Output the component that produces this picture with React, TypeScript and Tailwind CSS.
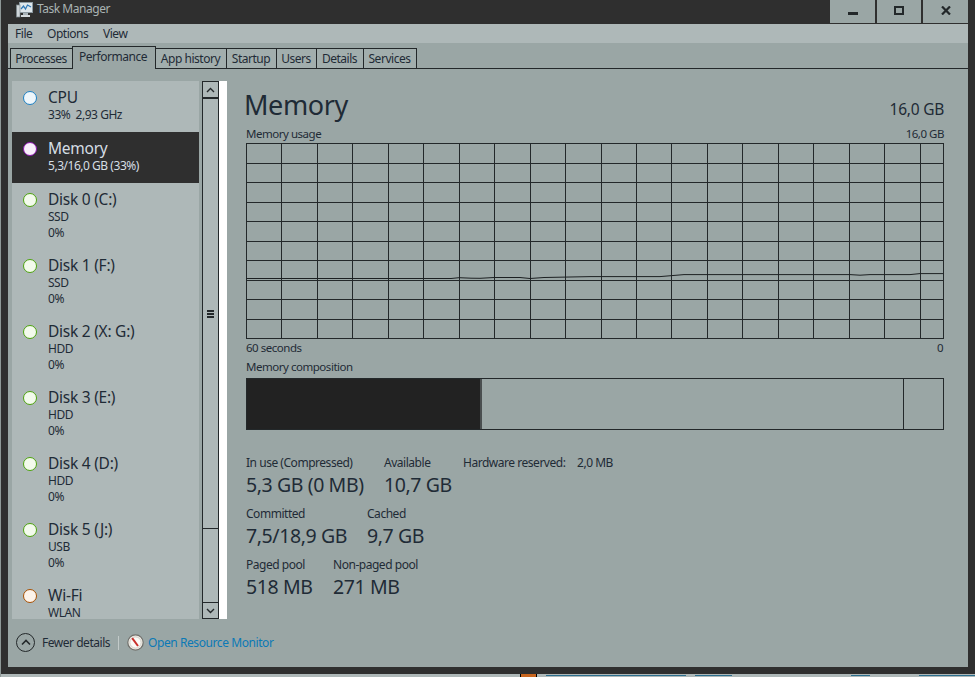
import React from 'react'

const tabs = [
  { name: 'Processes', w: 'w-[63px]' },
  { name: 'Performance', w: 'w-[84px]', active: true },
  { name: 'App history', w: 'w-[72px]' },
  { name: 'Startup', w: 'w-[51px]' },
  { name: 'Users', w: 'w-[41px]' },
  { name: 'Details', w: 'w-[48px]' },
  { name: 'Services', w: 'w-[54px]' },
]

const devices = [
  { name: 'CPU', lines: ['33%  2,93 GHz'], ring: 'border-[#1b80c4]', fill: 'bg-[#eef6fb]' },
  { name: 'Memory', lines: ['5,3/16,0 GB (33%)'], ring: 'border-[#8a12ae]', fill: 'bg-[#f8effb]', selected: true },
  { name: 'Disk 0 (C:)', lines: ['SSD', '0%'], ring: 'border-[#4ca30d]', fill: 'bg-[#f3faec]' },
  { name: 'Disk 1 (F:)', lines: ['SSD', '0%'], ring: 'border-[#4ca30d]', fill: 'bg-[#f3faec]' },
  { name: 'Disk 2 (X: G:)', lines: ['HDD', '0%'], ring: 'border-[#4ca30d]', fill: 'bg-[#f3faec]' },
  { name: 'Disk 3 (E:)', lines: ['HDD', '0%'], ring: 'border-[#4ca30d]', fill: 'bg-[#f3faec]' },
  { name: 'Disk 4 (D:)', lines: ['HDD', '0%'], ring: 'border-[#4ca30d]', fill: 'bg-[#f3faec]' },
  { name: 'Disk 5 (J:)', lines: ['USB', '0%'], ring: 'border-[#4ca30d]', fill: 'bg-[#f3faec]' },
  { name: 'Wi-Fi', lines: ['WLAN'], ring: 'border-[#a74f01]', fill: 'bg-[#fdf3ea]' },
]

const graphLine =
  '0,278.5 205,278.5 213,277.7 225,278.2 234,278.3 248,277.5 274,277.5 284,278.5 298,277.5 345,276.6 414,276.6 438,274.6 604,274.6 614,275.2 624,274.6 664,274.6 674,273.6 697,273.6'

function Graph() {
  const cols = Array.from({ length: 20 }, (_, i) => Math.round(i * 35.45) + 0.5)
  const rows = Array.from({ length: 11 }, (_, i) => Math.round(i * 19.5) + 0.5)
  return (
    <svg width="698" height="196" viewBox="0 0 698 196" className="block">
      {cols.map((x) => (
        <line key={x} x1={x} x2={x} y1="0" y2="196" stroke="#23282a" strokeWidth="1" />
      ))}
      <line x1="697.5" x2="697.5" y1="0" y2="196" stroke="#23282a" strokeWidth="1" />
      {rows.map((y) => (
        <line key={y} x1="0" x2="698" y1={y} y2={y} stroke="#23282a" strokeWidth="1" />
      ))}
      <polyline
        points={graphLine}
        transform="translate(0,-143)"
        fill="none"
        stroke="#1c2022"
        strokeWidth="1"
      />
    </svg>
  )
}

function Stat({ label, value, w }: { label: string; value: string; w: string }) {
  return (
    <div className={w}>
      <div className="h-[16px] text-[12px] leading-[15px] text-[#1f2b36]">{label}</div>
      <div className="mt-px h-[26px] whitespace-nowrap text-[19.5px] leading-[26px] tracking-[-0.4px] text-[#1f2b36]">{value}</div>
    </div>
  )
}

function AppIcon() {
  return (
    <svg width="17" height="17" viewBox="0 0 17 17">
      <rect x="3.5" y="1.5" width="13" height="10" fill="#dfe7ec" stroke="#8d9aa2" />
      <polyline points="5,8 7.5,5 9.5,8 11.5,4 15,6" fill="none" stroke="#2f78b5" strokeWidth="1.2" />
      <rect x="0.5" y="4" width="3.5" height="12" fill="#cfd6da" stroke="#7e8a90" strokeWidth="0.7" />
      <rect x="7" y="12" width="5" height="2" fill="#aab4b9" />
      <rect x="5" y="14" width="9" height="2" fill="#d6dcdf" />
    </svg>
  )
}

function MonitorIcon() {
  return (
    <svg width="17" height="17" viewBox="0 0 17 17">
      <circle cx="8.5" cy="8.5" r="7.7" fill="#f1ede6" stroke="#6f6f6b" strokeWidth="1.2" />
      <circle cx="8.5" cy="8.5" r="5.6" fill="#fbfaf7" stroke="#bdb9b0" strokeWidth="0.6" />
      <line x1="5.2" y1="4.2" x2="11" y2="12" stroke="#c9302c" strokeWidth="2" />
    </svg>
  )
}

export default function App() {
  return (
    <div className="relative flex h-[677px] w-[975px] flex-col overflow-hidden bg-[#2f2f2f] font-['Noto_Sans','Liberation_Sans',sans-serif] tracking-[-0.47px]">
      <div className="absolute left-0 top-0 h-full w-px bg-[#8d9796]" />

      {/* Title bar */}
      <div className="flex h-[24px] shrink-0">
        <div className="ml-[16px] mt-px"><AppIcon /></div>
        <span className="ml-[4px] text-[12px] leading-[18px] text-[#aab3b3]">Task Manager</span>
        <div className="ml-auto mr-[7px] flex gap-[2px]">
          <div className="flex h-[23px] w-[45px] items-center justify-center bg-[#9aa6a5]">
            <div className="mt-[3px] h-[3px] w-[10px] bg-[#23282a]" />
          </div>
          <div className="flex h-[23px] w-[44px] items-center justify-center bg-[#9aa6a5]">
            <div className="mb-[2px] h-[9px] w-[10px] border-2 border-[#23282a]" />
          </div>
          <div className="flex h-[23px] w-[45px] items-center justify-center bg-[#9aa6a5]">
            <svg width="10" height="9" viewBox="0 0 10 9" className="mb-[3px]">
              <path d="M1 0.5 L9 8.5 M9 0.5 L1 8.5" stroke="#23282a" strokeWidth="2.2" fill="none" />
            </svg>
          </div>
        </div>
      </div>

      {/* Window */}
      <div className="ml-[8px] mr-[7px] flex h-[643px] shrink-0 flex-col bg-[#9aa6a5]">
        <div className="flex h-[19px] shrink-0 bg-[#aeb8b8] text-[12px] leading-[19px] text-[#1f2b36]">
          <span className="ml-[7px] w-[32px]">File</span>
          <span className="w-[56px]">Options</span>
          <span>View</span>
        </div>

        <div className="flex h-[26px] shrink-0 items-end border-b border-[#23282a] pl-[3px]">
          {tabs.map((t) =>
            t.active ? (
              <div
                key={t.name}
                className={`${t.w} relative -mb-px -ml-px flex h-[23px] shrink-0 justify-center border border-b-0 border-[#23282a] bg-[#9aa6a5] pr-[2px] text-[12px] leading-[20px] text-[#1f2b36]`}
              >
                {t.name}
              </div>
            ) : (
              <div
                key={t.name}
                className={`${t.w} -ml-px flex h-[20px] shrink-0 justify-center border border-b-0 border-[#23282a] bg-[#a2aead] pr-px text-[12px] leading-[19px] text-[#1f2b36]`}
              >
                {t.name}
              </div>
            ),
          )}
        </div>

        <div className="flex min-h-0 flex-1">
          {/* Device list */}
          <div className="ml-[4px] mt-[12px] flex h-[538px] shrink-0">
            <div className="h-full w-[187px] overflow-hidden bg-[#aeb8b8]">
              {devices.map((d) => (
                <div
                  key={d.name}
                  className={`flex pt-[6px] ${d.lines.length === 1 ? 'h-[51px]' : 'h-[66px]'} ${d.selected ? 'bg-[#2f2f2f] text-[#d5dee4]' : 'text-[#1f2b36]'}`}
                >
                  <div className={`ml-[11px] mt-[4px] h-[14px] w-[14px] shrink-0 rounded-full border-[1.5px] ${d.ring} ${d.fill}`} />
                  <div className="ml-[11px]">
                    <div className="h-[20px] whitespace-nowrap text-[15.5px] leading-[20px] tracking-[-0.25px]">{d.name}</div>
                    {d.lines.map((l, i) => (
                      <div key={i} className="h-[16px] whitespace-pre text-[12px] leading-[15px]">{l}</div>
                    ))}
                  </div>
                </div>
              ))}
            </div>

            {/* Scrollbar */}
            <div className="ml-[3px] flex h-full w-[17px] shrink-0 flex-col border border-[#23282a] bg-[#aeb8b8]">
              <div className="flex h-[17px] shrink-0 items-center justify-center border-b-2 border-[#23282a]">
                <svg width="9" height="6" viewBox="0 0 9 6"><path d="M1 5 L4.5 1.5 L8 5" fill="none" stroke="#23282a" strokeWidth="1.4" /></svg>
              </div>
              <div className="flex h-[430px] shrink-0 flex-col items-center justify-center gap-px border-b border-[#23282a]">
                <div className="h-[2px] w-[7px] bg-[#23282a]" />
                <div className="h-[2px] w-[7px] bg-[#23282a]" />
                <div className="h-[2px] w-[7px] bg-[#23282a]" />
              </div>
              <div className="flex-1" />
              <div className="flex h-[16px] shrink-0 items-center justify-center border-t border-[#23282a]">
                <svg width="9" height="6" viewBox="0 0 9 6"><path d="M1 1 L4.5 4.5 L8 1" fill="none" stroke="#23282a" strokeWidth="1.4" /></svg>
              </div>
            </div>
            <div className="h-full w-[8px] shrink-0 bg-white" />
          </div>

          {/* Memory details */}
          <div className="ml-[19px] flex w-[698px] shrink-0 flex-col">
            <div className="mt-[18px] flex h-[36px] items-end justify-between">
              <span className="-ml-[2px] text-[27px] leading-[36px] tracking-[-0.4px] text-[#1f2b36]">Memory</span>
              <span className="mb-[4px] text-[15.5px] leading-[20px] tracking-[-0.25px] text-[#1f2b36]">16,0 GB</span>
            </div>
            <div className="mt-[3px] flex h-[16px] justify-between text-[11.5px] leading-[16px] text-[#1f2b36]">
              <span>Memory usage</span>
              <span>16,0 GB</span>
            </div>
            <div className="mt-[1px]"><Graph /></div>
            <div className="mt-[1px] flex h-[16px] justify-between text-[11.5px] leading-[16px] text-[#1f2b36]">
              <span>60 seconds</span>
              <span className="mr-[1px]">0</span>
            </div>
            <div className="mt-[3px] h-[16px] text-[11.5px] leading-[16px] text-[#1f2b36]">Memory composition</div>
            <div className="mt-[3px] flex h-[52px] w-[698px] border border-[#23282a]">
              <div className="w-[233px] bg-[#222222]" />
              <div className="w-[2px] bg-[#4a4f50]" />
              <div className="ml-[421px] w-px bg-[#23282a]" />
            </div>

            <div className="mt-[25px] flex">
              <Stat label="In use (Compressed)" value="5,3 GB (0 MB)" w="w-[138px]" />
              <Stat label="Available" value="10,7 GB" w="w-[79px]" />
              <div className="h-[16px] w-[114px] whitespace-nowrap text-[12px] leading-[15px] text-[#1f2b36]">Hardware reserved:</div>
              <div className="h-[16px] text-[12px] leading-[15px] text-[#1f2b36]">2,0 MB</div>
            </div>
            <div className="mt-[8px] flex">
              <Stat label="Committed" value="7,5/18,9 GB" w="w-[121px]" />
              <Stat label="Cached" value="9,7 GB" w="w-[80px]" />
            </div>
            <div className="mt-[8px] flex">
              <Stat label="Paged pool" value="518 MB" w="w-[87px]" />
              <Stat label="Non-paged pool" value="271 MB" w="w-[100px]" />
            </div>
          </div>
        </div>

        {/* Footer */}
        <div className="flex h-[48px] shrink-0 items-center pb-[1px] text-[12px]">
          <div className="ml-[8px] flex h-[19px] w-[19px] items-center justify-center rounded-full border-[1.5px] border-[#23282a]">
            <svg width="10" height="7" viewBox="0 0 10 7"><path d="M1 5.5 L5 1.5 L9 5.5" fill="none" stroke="#23282a" strokeWidth="1.6" /></svg>
          </div>
          <span className="ml-[7px] w-[68px] whitespace-nowrap text-[#1f2b36]">Fewer details</span>
          <div className="ml-[8px] h-[14px] w-px bg-[#c2cac9]" />
          <div className="ml-[8px]"><MonitorIcon /></div>
          <span className="ml-[4px] whitespace-nowrap tracking-[-0.42px] text-[#0b79b6]">Open Resource Monitor</span>
        </div>
      </div>

      {/* Window behind, peeking out under the frame */}
      <div className="mt-[7px] flex h-[3px] flex-1 items-start gap-[9px] bg-[#aeb8b8] pl-[520px]">
        <div className="flex h-[3px] w-[18px] border-x border-black bg-[#c9661f]" />
        <div className="mt-[1px] h-px w-[150px] bg-[#2c6f8f]" />
        <div className="mt-[1px] h-px w-[40px] bg-[#2c6f8f]" />
        <div className="ml-[110px] mt-[1px] h-px w-[20px] bg-[#2c6f8f]" />
        <div className="ml-[40px] mt-[1px] h-px w-[60px] bg-[#2c6f8f]" />
      </div>
    </div>
  )
}
